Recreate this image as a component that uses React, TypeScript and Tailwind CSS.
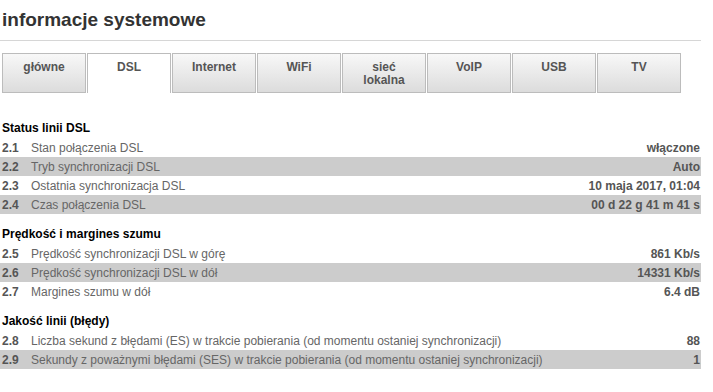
const tabs = [
  { label: 'główne' },
  { label: 'DSL', active: true },
  { label: 'Internet' },
  { label: 'WiFi' },
  { label: 'sieć\nlokalna' },
  { label: 'VoIP' },
  { label: 'USB' },
  { label: 'TV' },
];

type Row = { id: string; label: string; value: string };

const sections: { title: string; rows: Row[] }[] = [
  {
    title: 'Status linii DSL',
    rows: [
      { id: '2.1', label: 'Stan połączenia DSL', value: 'włączone' },
      { id: '2.2', label: 'Tryb synchronizacji DSL', value: 'Auto' },
      { id: '2.3', label: 'Ostatnia synchronizacja DSL', value: '10 maja 2017, 01:04' },
      { id: '2.4', label: 'Czas połączenia DSL', value: '00 d 22 g 41 m 41 s' },
    ],
  },
  {
    title: 'Prędkość i margines szumu',
    rows: [
      { id: '2.5', label: 'Prędkość synchronizacji DSL w górę', value: '861 Kb/s' },
      { id: '2.6', label: 'Prędkość synchronizacji DSL w dół', value: '14331 Kb/s' },
      { id: '2.7', label: 'Margines szumu w dół', value: '6.4 dB' },
    ],
  },
  {
    title: 'Jakość linii (błędy)',
    rows: [
      { id: '2.8', label: 'Liczba sekund z błędami (ES) w trakcie pobierania (od momentu ostaniej synchronizacji)', value: '88' },
      { id: '2.9', label: 'Sekundy z poważnymi błędami (SES) w trakcie pobierania (od momentu ostaniej synchronizacji)', value: '1' },
    ],
  },
];

export default function App() {
  return (
    <div className="w-[713px] h-[392px] bg-white overflow-hidden font-['Liberation_Sans',Arial,sans-serif]">
      <div className="w-[701px]">
        <div className="pt-2 pb-2 border-b border-[#d6d6d6]">
          <h1 className="pl-[2px] text-[19px] leading-[24px] font-bold text-[#333]">informacje systemowe</h1>
        </div>

        <div className="flex gap-px pl-[2px] mt-3">
          {tabs.map((tab) => (
            <div
              key={tab.label}
              className={
                tab.active
                  ? 'w-[84px] h-10 pt-[7px] border border-b-0 border-[#bcbcbc] bg-white text-center text-xs leading-[13px] font-bold text-[#555] whitespace-pre-line'
                  : 'w-[84px] h-10 pt-[7px] border border-[#bcbcbc] bg-gradient-to-b from-[#f8f8f8] to-[#dcdcdc] text-center text-xs leading-[13px] font-bold text-[#555] whitespace-pre-line'
              }
            >
              {tab.label}
            </div>
          ))}
        </div>

        <div className="flex flex-col gap-[11px] pt-[26px]">
          {sections.map((section) => (
            <div key={section.title}>
              <div className="pl-[2px] text-xs leading-[19px] font-bold text-black">{section.title}</div>
              {section.rows.map((row, i) => (
                <div
                  key={row.id}
                  className={`flex items-center h-[19px] text-xs pl-[2px] pr-px ${i % 2 === 1 ? 'bg-[#cccccc]' : ''}`}
                >
                  <span className="w-[29px] font-bold text-[#555]">{row.id}</span>
                  <span className="flex-1 text-[#666]">{row.label}</span>
                  <span className="font-bold text-[#555]">{row.value}</span>
                </div>
              ))}
            </div>
          ))}
        </div>
      </div>
    </div>
  );
}
